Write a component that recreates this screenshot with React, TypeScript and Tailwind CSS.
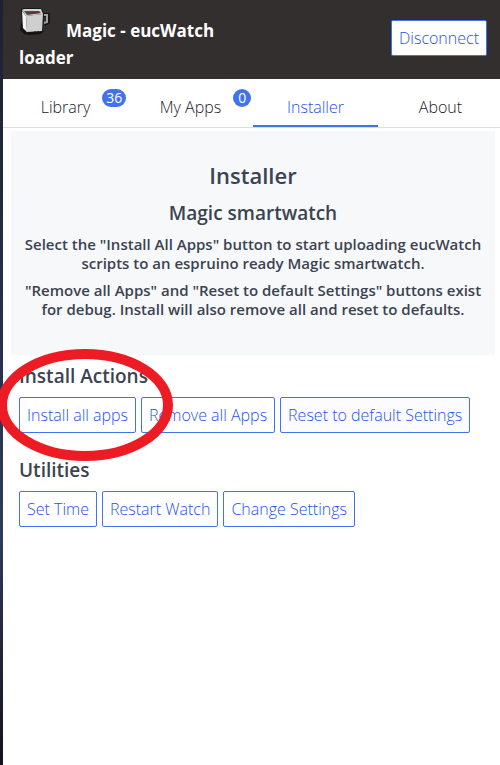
import type { ReactNode } from "react";

function MugIcon() {
  return (
    <svg width="32" height="32" viewBox="0 0 32 32" aria-hidden="true" className="shrink-0">
      <path d="M2 18 L1 25 L5 29 L10 30 L22 29 L25 26 Z" fill="#0c0c0c" opacity="0.8" />
      <path d="M24 10 H29 V17 L25 19" fill="none" stroke="#1a1a1a" strokeWidth="4" />
      <path d="M2 5 L4 3 H22 L25 8 L24 27 L8 29 L3 24 Z" fill="#1a1a1a" />
      <path d="M3 5 L5 4 H22 L24 9 L7 11 Z" fill="#d2d2d2" />
      <path d="M5 6 H20 L22 8 L8 10 Z" fill="#4c4a4a" />
      <path d="M8 9 L10 8 L19 7 L21 8 Z" fill="#7a1f1a" />
      <path d="M3 6 L7 11 L8 27 L4 23 Z" fill="#f4f4f4" />
      <path d="M7 11 L24 9 L23 26 L8 27 Z" fill="#cfcfcf" />
      <path d="M25 10 H28 V17 L25 18" fill="none" stroke="#a0a0a0" strokeWidth="2" />
      <path d="M10 29 V27 M13 29 V27 M16 29 V26 M19 29 V26 M22 28 V26" stroke="#111" strokeWidth="1" />
    </svg>
  );
}

function Button({ children, tinted = false }: { children: ReactNode; tinted?: boolean }) {
  return (
    <button
      type="button"
      className={
        "h-9 shrink-0 rounded-xs border border-[#4273ea] px-[7px] text-base leading-6 font-light whitespace-nowrap text-[#2453ea] " +
        (tinted ? "bg-[#fcfbff]" : "bg-white")
      }
    >
      {children}
    </button>
  );
}

function Tab({ label, count, active = false }: { label: string; count?: number; active?: boolean }) {
  return (
    <li className="flex-1">
      <a
        href="#"
        className={
          "flex h-12 items-center justify-center border-b-2 pt-2.5 text-base leading-5 font-light " +
          (active ? "border-[#4273ea] text-[#2453ea]" : "border-transparent text-[#1c202a]")
        }
      >
        <span className="relative">
          {label}
          {count !== undefined && (
            <span className="absolute bottom-2.5 left-full ml-3 flex h-[18px] min-w-[18px] items-center justify-center rounded-full bg-[#4273ea] px-1 text-sm font-normal text-white">
              {count}
            </span>
          )}
        </span>
      </a>
    </li>
  );
}

export default function App() {
  return (
    <div className="flex min-h-screen overflow-hidden bg-white font-['Open_Sans','Noto_Sans',sans-serif] text-[#3b4351]">
      <div className="w-[3px] shrink-0 bg-linear-to-b from-[#1b2130] via-[#2f3b5a] via-70% to-[#15131b]" />
      <div className="w-full shrink-0">
        <header className="flex items-center justify-between bg-[#332f2f] pt-[5px] pr-4 pb-2 pl-4 text-white">
          <h1 className="max-w-60 text-[17px] leading-[27px] font-bold">
            <span className="mr-[15px] inline-block h-8 align-baseline">
              <MugIcon />
            </span>
            Magic - eucWatch loader
          </h1>
          <Button>Disconnect</Button>
        </header>

        <nav className="border-b border-[#dadee4]">
          <ul className="flex">
            <Tab label="Library" count={36} />
            <Tab label="My Apps" count={0} />
            <Tab label="Installer" active />
            <Tab label="About" />
          </ul>
        </nav>

        <main>
          <section className="mx-2 mt-[3px] bg-[#f7f8fa] px-2 pt-7 pb-9 text-center">
            <h2 className="text-[22px] leading-8 font-semibold">Installer</h2>
            <h3 className="mt-2 text-[19px] leading-7 font-semibold">Magic smartwatch</h3>
            <p className="mt-2 text-[15px] leading-[19px] font-semibold">
              Select the "Install All Apps" button to start uploading eucWatch scripts to an espruino
              ready Magic smartwatch.
            </p>
            <p className="mt-2 text-[15px] leading-[19px] font-semibold">
              "Remove all Apps" and "Reset to default Settings" buttons exist for debug. Install will
              also remove all and reset to defaults.
            </p>
          </section>

          <section className="relative px-4 pt-2">
            <h3 className="text-[19px] leading-[26px] font-semibold">Install Actions</h3>
            <div className="mt-2 flex gap-[5px]">
              <Button>Install all apps</Button>
              <Button>Remove all Apps</Button>
              <Button tinted>Reset to default Settings</Button>
            </div>
            <svg
              width="178"
              height="114"
              viewBox="0 0 178 114"
              aria-hidden="true"
              className="pointer-events-none absolute -top-2 -left-1.5 z-10"
            >
              <ellipse cx="88" cy="58" rx="83" ry="51" fill="none" stroke="#ed1c24" strokeWidth="10" />
            </svg>
          </section>

          <section className="px-4 pt-6">
            <h3 className="text-[19px] leading-[26px] font-semibold">Utilities</h3>
            <div className="mt-2 flex gap-[5px]">
              <Button>Set Time</Button>
              <Button>Restart Watch</Button>
              <Button>Change Settings</Button>
            </div>
          </section>
        </main>
      </div>
    </div>
  );
}
